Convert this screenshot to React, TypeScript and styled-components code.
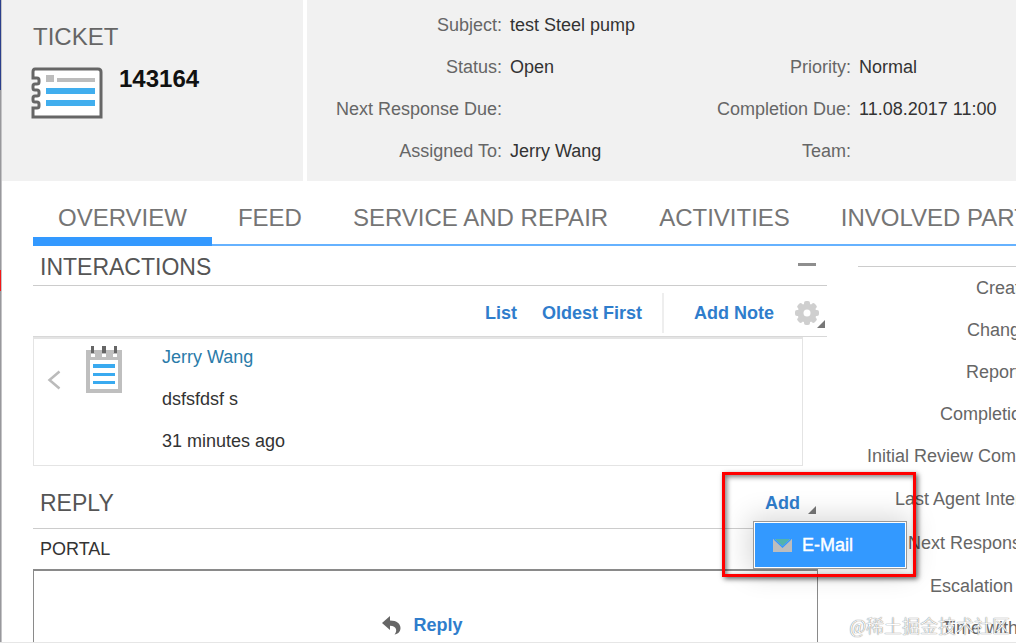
import React from "react";
import styled, { createGlobalStyle } from "styled-components";

const Global = createGlobalStyle`
  * { box-sizing: border-box; }
  body {
    margin: 0;
    overflow: hidden;
    background: #fff;
    color: #333;
    font-family: "Liberation Sans", Arial, sans-serif;
    font-size: 18px;
    line-height: 22px;
  }
  h1, h2, h3, p, dl, dt, dd { margin: 0; font-weight: 400; }
  button { font: inherit; border: 0; padding: 0; background: none; cursor: pointer; }
  svg { display: block; flex: none; }
`;

const Shell = styled.div`
  position: relative;
  display: flex;
  height: 100vh;
  overflow: hidden;
  border-bottom: 1px solid #e6e6e6;
`;

const Edge = styled.div`
  flex: none;
  width: 2px;
  display: flex;
  flex-direction: column;
  border-right: 1px solid #c4c4c6;
`;

const EdgePart = styled.span<{ $color: string; $height?: number }>`
  background: ${(p) => p.$color};
  ${(p) => (p.$height ? `height: ${p.$height}px;` : "flex: 1;")}
`;

const Page = styled.div`
  flex: 1;
  min-width: 0;
  display: flex;
  flex-direction: column;
`;

const Header = styled.header`
  display: grid;
  grid-template-columns: 301px 1fr;
  gap: 4px;
`;

const TicketCard = styled.section`
  background: #f1f1f1;
  padding: 25px 29px;
`;

const TicketTitle = styled.h1`
  font-size: 24px;
  line-height: 24px;
  padding-left: 2px;
  color: #666;
`;

const TicketBody = styled.div`
  display: flex;
  gap: 16px;
  padding-top: 18px;
`;

const TicketNumber = styled.strong`
  font-size: 24px;
  line-height: 24px;
  color: #111;
`;

const Facts = styled.dl`
  background: #f1f1f1;
  display: grid;
  grid-template-columns: 195px 1fr 140px 149px;
  grid-auto-rows: 42px;
  column-gap: 8px;
  align-items: center;
  padding: 4px 8px 9px 0;
`;

const Label = styled.dt`
  text-align: right;
  white-space: nowrap;
  color: #666;
`;

const Value = styled.dd<{ $wide?: boolean }>`
  white-space: nowrap;
  color: #333;
  ${(p) => (p.$wide ? "grid-column: span 3;" : "")}
`;

const Tabs = styled.nav`
  display: flex;
  flex: none;
  gap: 1px;
  height: 65px;
  margin-left: 31px;
  border-bottom: 2px solid #66b2ff;
`;

const Tab = styled.a<{ $active?: boolean }>`
  flex: none;
  height: 65px;
  padding: 21px 25px 0;
  border-bottom: ${(p) => (p.$active ? "9px solid #3399ff" : "0")};
  font-size: 24px;
  line-height: 32px;
  color: #757575;
  text-decoration: none;
  white-space: nowrap;
`;

const Content = styled.main`
  flex: 1;
  min-height: 0;
  display: grid;
  grid-template-columns: 1fr 158px;
  gap: 31px;
  padding-left: 31px;
`;

const Column = styled.div`
  display: flex;
  flex-direction: column;
  min-width: 0;
`;

const SectionBar = styled.div<{ $height: number; $top: number }>`
  position: relative;
  flex: none;
  display: flex;
  align-items: center;
  justify-content: space-between;
  height: ${(p) => p.$height}px;
  padding: ${(p) => p.$top}px 11px 0 7px;
  border-bottom: 1px solid #ccc;
`;

const SectionTitle = styled.h2`
  font-size: 23px;
  line-height: 28px;
  color: #555;
`;

const Collapse = styled.button`
  width: 18px;
  height: 8px;
  border-bottom: 3px solid #8e8e8e;
  margin-bottom: 10px;
`;

const Toolbar = styled.div`
  flex: none;
  display: flex;
  align-items: center;
  justify-content: flex-end;
  height: 51px;
  padding: 4px 2px 0 0;
  border-bottom: 1px solid #d8d8d8;
`;

const LinkButton = styled.button`
  font-weight: 700;
  color: #2f7dcc;
  white-space: nowrap;
`;

const ToolGroup = styled.div`
  display: flex;
  align-items: center;
  gap: 25px;
  height: 40px;
  padding-right: 20px;
  margin-right: 30px;
  border-right: 2px solid #eee;
`;

const GearButton = styled.button`
  display: flex;
  align-items: flex-end;
  margin-left: 21px;

  svg + svg {
    margin: 0 0 -3px -2px;
  }
`;

const Note = styled.article`
  flex: none;
  display: flex;
  margin-right: 24px;
  height: 129px;
  padding: 7px 0 0 13px;
  border: 1px solid #e4e4e4;
  border-top: 2px solid #e4e4e4;
`;

const Back = styled.button`
  align-self: flex-start;
  margin: 24px 24px 0 0;
`;

const NoteText = styled.div`
  display: grid;
  align-content: start;
  gap: 20px;
  padding-left: 39px;
`;

const Author = styled.a`
  color: #2a7ba9;
  text-decoration: none;
`;

const Anchor = styled.div`
  position: relative;
`;

const AddButton = styled(LinkButton)`
  display: flex;
  align-items: flex-end;
  gap: 8px;
`;

const Menu = styled.div`
  position: absolute;
  z-index: 1;
  top: 29px;
  left: -12px;
  width: 154px;
  padding: 1px;
  border: 1px solid #999;
  background: #fff;
  box-shadow: 0 0 28px 4px rgba(0, 0, 0, 0.16);
`;

const MenuItem = styled.button`
  display: flex;
  align-items: center;
  gap: 10px;
  width: 100%;
  height: 44px;
  padding-left: 18px;
  background: #3399ff;
  color: #fff;
  -webkit-text-stroke: 0.4px #fff;
`;

const Highlight = styled.div`
  position: absolute;
  z-index: 2;
  top: -20px;
  left: -43px;
  width: 194px;
  height: 105px;
  border: 3px solid #f00;
  box-shadow: 2px 2px 5px rgba(0, 0, 0, 0.6), inset 2px 2px 5px rgba(0, 0, 0, 0.5);
  pointer-events: none;
`;

const PortalTitle = styled.h3`
  flex: none;
  padding: 0 7px;
  font-size: 18px;
  line-height: 40px;
  color: #333;
`;

const PortalBox = styled.div`
  flex: 1;
  display: flex;
  align-items: flex-start;
  justify-content: center;
  margin-right: 9px;
  padding-top: 43px;
  border: solid #8a8a8a;
  border-width: 2px 1px 0;
`;

const ReplyButton = styled(LinkButton)`
  display: flex;
  align-items: center;
  gap: 12px;
  margin-right: 6px;
`;

const Dates = styled.dl`
  width: 216px;
  margin-top: 20px;
  border-top: 1px solid #ccc;
`;

const DateLabel = styled(Label)<{ $tall?: boolean }>`
  line-height: ${(p) => (p.$tall ? 44 : 42)}px;
`;

const Watermark = styled.small`
  position: absolute;
  z-index: 3;
  right: 6px;
  bottom: 3px;
  font-family: "Liberation Serif", "Noto Sans CJK SC", serif;
  font-size: 18px;
  line-height: 24px;
  font-weight: 300;
  color: #fff;
  text-shadow: 0 0 1px #777, 0 0 1px #888;
`;

const TicketIcon = () => (
  <svg width="72" height="52" viewBox="0 0 72 52" aria-hidden="true">
    <path
      d="M4 2H67Q70 2 70 5V50H2V41H6Q8 41 8 39V37Q8 35 6 35H4Q2 35 2 33V31Q2 29 4 29H6Q8 29 8 27V25Q8 23 6 23H4Q2 23 2 21V19Q2 17 4 17H6Q8 17 8 15V13Q8 11 6 11H2V5Q2 2 4 2Z"
      fill="#fff"
      stroke="#666"
      strokeWidth="3"
    />
    <path d="M15 8h8v7h-8zM26 11h38v4H26z" fill="#bdbdbd" />
    <path d="M15 21h49v6H15zM15 33h49v6H15z" fill="#41aeee" />
  </svg>
);

const NotepadIcon = () => (
  <svg width="38" height="48" viewBox="0 0 38 48" aria-hidden="true">
    <path d="M1 4H37V47H1Z" fill="#bfbfbf" />
    <path d="M5 14H33V43H5Z" fill="#fff" />
    <path d="M6 8h4v3H6zM17 8h4v3h-4zM28 8h4v3h-4z" fill="#fff" />
    <path d="M6 0h3v7H6zM17 0h4v7h-4zM29 0h3v7h-3z" fill="#666" />
    <path d="M8 18h22v4H8zM8 27h22v3H8zM8 35h22v3H8z" fill="#39aaf0" />
  </svg>
);

const GearIcon = () => (
  <svg width="24" height="24" viewBox="-12 -12 24 24" aria-hidden="true">
    <g fill="#cfcfcf">
      {[0, 45, 90, 135].map((angle) => (
        <rect key={angle} x="-3" y="-12" width="6" height="24" rx="2" transform={`rotate(${angle})`} />
      ))}
      <circle r="9.500" />
    </g>
    <circle r="3.500" fill="#fff" />
  </svg>
);

const Corner = () => (
  <svg width="8" height="8" viewBox="0 0 8 8" aria-hidden="true">
    <path d="M8 0V8H0Z" fill="#777" />
  </svg>
);

const BackIcon = () => (
  <svg width="14" height="20" viewBox="0 0 14 20" aria-hidden="true">
    <path d="M12.500 1.500L2.500 10L12.500 18.500" fill="none" stroke="#bbb" strokeWidth="2.500" />
  </svg>
);

const MailIcon = () => (
  <svg width="19" height="14" viewBox="0 0 19 14" aria-hidden="true">
    <path d="M0 1H19V14H0Z" fill="#bdbdbd" />
    <path d="M2 1H17L9.500 8Z" fill="#52b3ad" />
    <path d="M1 1L9.500 9L18 1" fill="none" stroke="#3399ff" strokeWidth="1.500" />
  </svg>
);

const ReplyIcon = () => (
  <svg width="19" height="19" viewBox="0 0 19 19" aria-hidden="true">
    <path d="M0 7L8 0V4.500C15 4.500 18.500 8 18.500 12C18.500 15.500 16 18 12.500 18.500C15.500 15.500 15 10 8 9.800V14Z" fill="#666" />
  </svg>
);

const tabs = ["OVERVIEW", "FEED", "SERVICE AND REPAIR", "ACTIVITIES", "INVOLVED PARTIES"];

const dates = [
  { label: "Created On:" },
  { label: "Changed On:" },
  { label: "Reported On:" },
  { label: "Completion Due:" },
  { label: "Initial Review Completion:" },
  { label: "Last Agent Interaction:", tall: true },
  { label: "Next Response Due:", tall: true },
  { label: "Escalation Status:" },
  { label: "Time with Agent:" },
];

export default function App() {
  return (
    <>
      <Global />
      <Shell>
        <Edge>
          <EdgePart $color="#2b3f8c" $height={90} />
          <EdgePart $color="#98989c" $height={180} />
          <EdgePart $color="#f21818" $height={21} />
          <EdgePart $color="#98989c" />
        </Edge>
        <Page>
          <Header>
            <TicketCard>
              <TicketTitle>TICKET</TicketTitle>
              <TicketBody>
                <TicketIcon />
                <TicketNumber>143164</TicketNumber>
              </TicketBody>
            </TicketCard>
            <Facts>
              <Label>Subject:</Label>
              <Value $wide>test Steel pump</Value>
              <Label>Status:</Label>
              <Value>Open</Value>
              <Label>Priority:</Label>
              <Value>Normal</Value>
              <Label>Next Response Due:</Label>
              <Value />
              <Label>Completion Due:</Label>
              <Value>11.08.2017 11:00</Value>
              <Label>Assigned To:</Label>
              <Value>Jerry Wang</Value>
              <Label>Team:</Label>
              <Value />
            </Facts>
          </Header>
          <Tabs>
            {tabs.map((name, i) => (
              <Tab key={name} href="#" $active={i === 0}>
                {name}
              </Tab>
            ))}
          </Tabs>
          <Content>
            <Column>
              <SectionBar $height={40} $top={2}>
                <SectionTitle>INTERACTIONS</SectionTitle>
                <Collapse aria-label="Collapse" />
              </SectionBar>
              <Toolbar>
                <ToolGroup>
                  <LinkButton>List</LinkButton>
                  <LinkButton>Oldest First</LinkButton>
                </ToolGroup>
                <LinkButton>Add Note</LinkButton>
                <GearButton aria-label="Settings">
                  <GearIcon />
                  <Corner />
                </GearButton>
              </Toolbar>
              <Note>
                <Back aria-label="Previous">
                  <BackIcon />
                </Back>
                <NotepadIcon />
                <NoteText>
                  <Author href="#">Jerry Wang</Author>
                  <p>dsfsfdsf s</p>
                  <p>31 minutes ago</p>
                </NoteText>
              </Note>
              <SectionBar $height={63} $top={12}>
                <SectionTitle>REPLY</SectionTitle>
                <Anchor>
                  <AddButton>
                    Add
                    <Corner />
                  </AddButton>
                  <Menu>
                    <MenuItem>
                      <MailIcon />
                      E-Mail
                    </MenuItem>
                  </Menu>
                  <Highlight />
                </Anchor>
              </SectionBar>
              <PortalTitle>PORTAL</PortalTitle>
              <PortalBox>
                <ReplyButton>
                  <ReplyIcon />
                  Reply
                </ReplyButton>
              </PortalBox>
            </Column>
            <Dates>
              {dates.map((d) => (
                <DateLabel key={d.label} $tall={d.tall}>
                  {d.label}
                </DateLabel>
              ))}
            </Dates>
          </Content>
        </Page>
        <Watermark>@稀土掘金技术社区</Watermark>
      </Shell>
    </>
  );
}
